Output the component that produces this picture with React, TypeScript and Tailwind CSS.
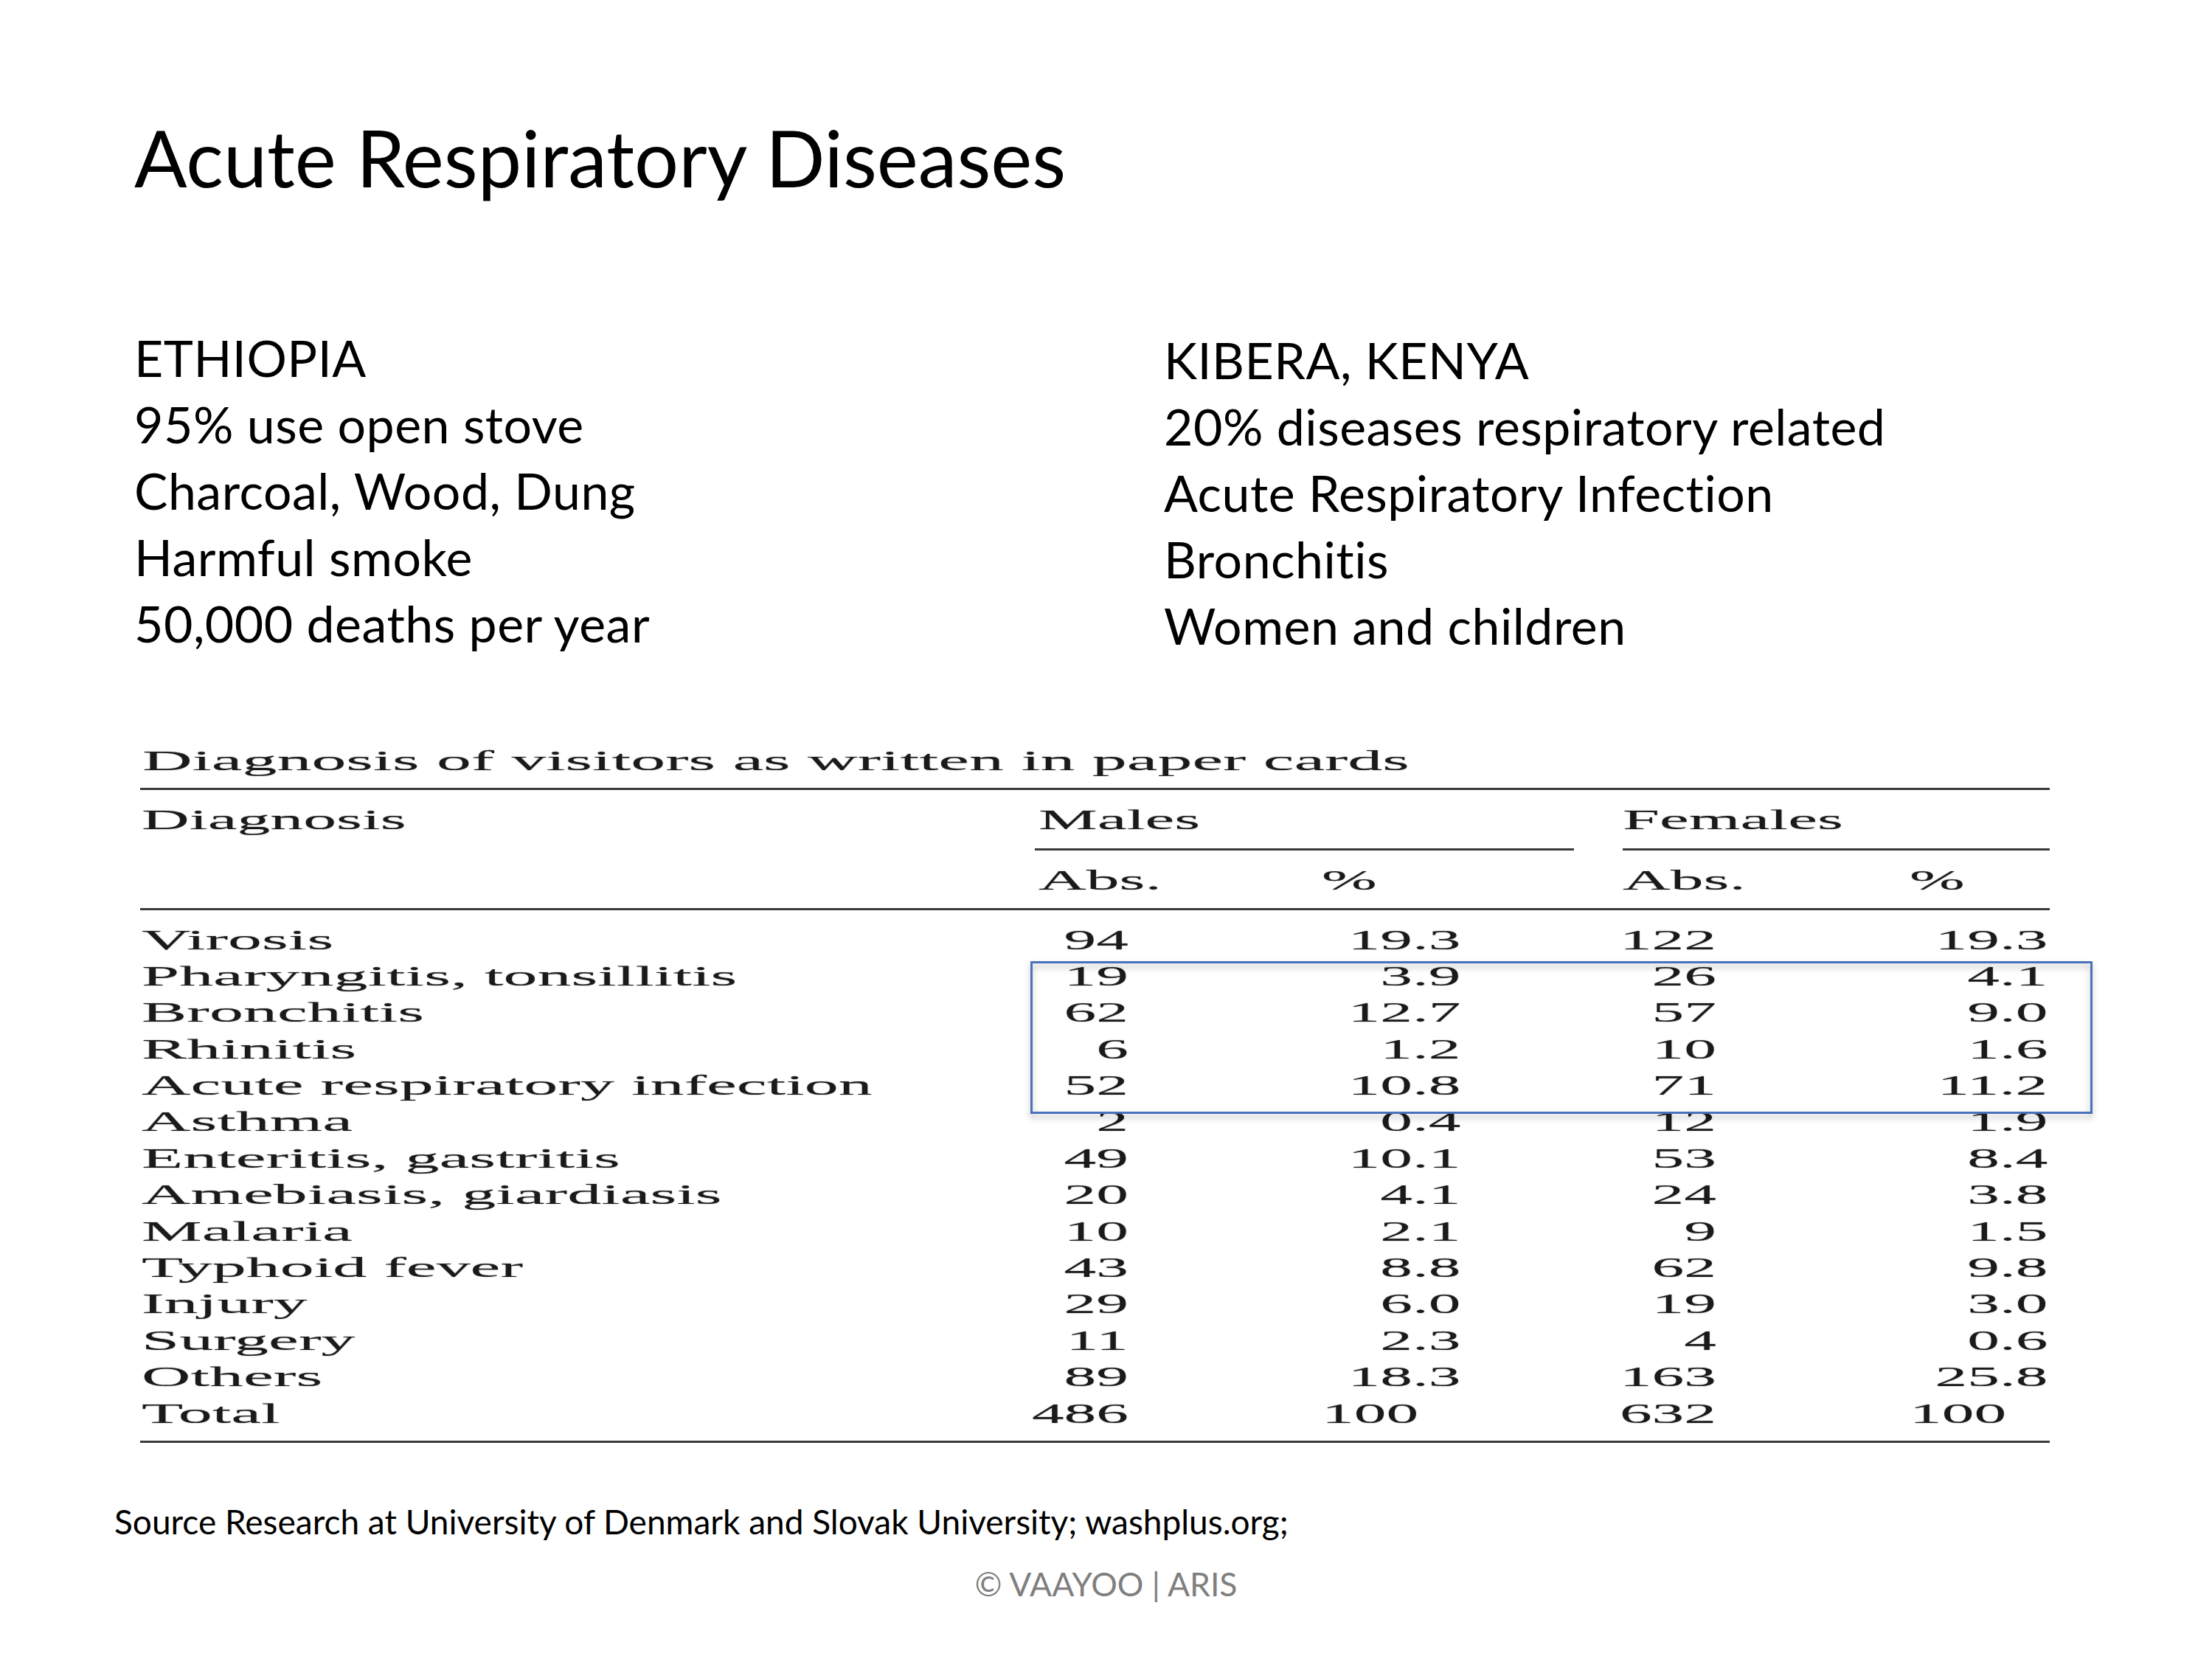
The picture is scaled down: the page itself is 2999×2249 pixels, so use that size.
type Row = [string, string, string, string, string];

const rows: Row[] = [
  ["Virosis", "94", "19.3", "122", "19.3"],
  ["Pharyngitis, tonsillitis", "19", "3.9", "26", "4.1"],
  ["Bronchitis", "62", "12.7", "57", "9.0"],
  ["Rhinitis", "6", "1.2", "10", "1.6"],
  ["Acute respiratory infection", "52", "10.8", "71", "11.2"],
  ["Asthma", "2", "0.4", "12", "1.9"],
  ["Enteritis, gastritis", "49", "10.1", "53", "8.4"],
  ["Amebiasis, giardiasis", "20", "4.1", "24", "3.8"],
  ["Malaria", "10", "2.1", "9", "1.5"],
  ["Typhoid fever", "43", "8.8", "62", "9.8"],
  ["Injury", "29", "6.0", "19", "3.0"],
  ["Surgery", "11", "2.3", "4", "0.6"],
  ["Others", "89", "18.3", "163", "25.8"],
];

const ethiopia = [
  "ETHIOPIA",
  "95% use open stove",
  "Charcoal, Wood, Dung",
  "Harmful smoke",
  "50,000 deaths per year",
];

const kibera = [
  "KIBERA, KENYA",
  "20% diseases respiratory related",
  "Acute Respiratory Infection",
  "Bronchitis",
  "Women and children",
];

// the table is a scanned figure stretched sideways, so the glyphs get scaled on x
function Label({ children }: { children: string }) {
  return (
    <span className="inline-block origin-left scale-x-[2.42] whitespace-nowrap">
      {children}
    </span>
  );
}

function Head({ children }: { children: string }) {
  return (
    <span className="inline-block origin-left scale-x-[2.36] whitespace-nowrap">
      {children}
    </span>
  );
}

function Num({ children }: { children: string }) {
  return (
    <span className="inline-block origin-right scale-x-[2.3] whitespace-nowrap">
      {children}
    </span>
  );
}

function NumL({ children }: { children: string }) {
  return (
    <span className="inline-block origin-left scale-x-[2.3] whitespace-nowrap">
      {children}
    </span>
  );
}

function Rule({ className = "" }: { className?: string }) {
  return <div className={`h-[3px] bg-[#3a3a3a] ${className}`} />;
}

function DiagnosisTable() {
  return (
    <div className="relative ml-[190px] w-[2589px] text-[38px] text-[#1a1a1a] font-['Liberation_Serif','Times_New_Roman',serif] [text-shadow:0_0_1px_rgba(0,0,0,0.45)]">
      <div className="h-[60px] pl-[3px] leading-[60px]">
        <span className="inline-block origin-left scale-x-[2.47] whitespace-nowrap">
          Diagnosis of visitors as written in paper cards
        </span>
      </div>

      <Rule className="mt-[7px] w-full" />

      {/* header */}
      <div className="mt-[15px] flex h-[50px] leading-[50px]">
        <div className="w-[1216px] pl-[2px]">
          <Head>Diagnosis</Head>
        </div>
        <div className="w-[794px] pl-[2px]">
          <Head>Males</Head>
        </div>
        <div className="flex-1">
          <Head>Females</Head>
        </div>
      </div>

      <div className="mt-[14px] flex">
        <Rule className="ml-[1213px] w-[731px]" />
        <Rule className="ml-[66px] w-[579px]" />
      </div>

      <div className="mt-[15px] flex h-[50px] leading-[50px]">
        <div className="w-[1216px]" />
        <div className="w-[386px] pl-[2px]">
          <Head>Abs.</Head>
        </div>
        <div className="w-[408px]">
          <Head>%</Head>
        </div>
        <div className="w-[389px]">
          <Head>Abs.</Head>
        </div>
        <div className="flex-1">
          <Head>%</Head>
        </div>
      </div>

      <Rule className="mt-[13px] w-full" />

      {/* body */}
      <div className="mt-[15.5px]">
        {rows.map((r) => (
          <div key={r[0]} className="flex h-[49.4px] leading-[49.4px]">
            <div className="w-[1216px] pl-[2px]">
              <Label>{r[0]}</Label>
            </div>
            <div className="w-[124px] text-right">
              <Num>{r[1]}</Num>
            </div>
            <div className="w-[450px] text-right">
              <Num>{r[2]}</Num>
            </div>
            <div className="w-[347px] text-right">
              <Num>{r[3]}</Num>
            </div>
            <div className="w-[449px] text-right">
              <Num>{r[4]}</Num>
            </div>
          </div>
        ))}
        <div className="flex h-[49.4px] leading-[49.4px]">
          <div className="w-[1216px] pl-[2px]">
            <Label>Total</Label>
          </div>
          <div className="w-[124px] text-right">
            <Num>486</Num>
          </div>
          <div className="w-[450px] pl-[262px]">
            <NumL>100</NumL>
          </div>
          <div className="w-[347px] text-right">
            <Num>632</Num>
          </div>
          <div className="w-[449px] pl-[262px]">
            <NumL>100</NumL>
          </div>
        </div>
      </div>

      <Rule className="mt-[12px] w-full" />

      {/* highlight box drawn over the figure */}
      <div className="absolute left-[1207px] top-[302px] h-[207px] w-[1440px] border-[3px] border-[#4a72ba] drop-shadow-[0_5px_4px_rgba(0,0,0,0.3)]" />
    </div>
  );
}

export default function App() {
  return (
    <div className="flex h-[2249px] w-[2999px] flex-col bg-white text-black font-['Lato','Liberation_Sans',sans-serif]">
      <h1 className="ml-[182px] mt-[160px] text-[106px] font-normal leading-none">
        Acute Respiratory Diseases
      </h1>

      <div className="mt-[174px] grid grid-cols-[1396px_1fr] pl-[182px] text-[68px] leading-[90px] tracking-[0.5px]">
        <div>
          {ethiopia.map((t) => (
            <div key={t}>{t}</div>
          ))}
        </div>
        <div className="mt-[3px]">
          {kibera.map((t) => (
            <div key={t}>{t}</div>
          ))}
        </div>
      </div>

      <div className="mt-[108px]">
        <DiagnosisTable />
      </div>

      <div className="ml-[155px] mt-[82px] text-[46px] leading-[50px]">
        Source Research at University of Denmark and Slovak University; washplus.org;
      </div>

      <div className="mt-[34px] text-center text-[44.5px] leading-[50px] text-[#7f7f7f]">
        © VAAYOO | ARIS
      </div>
    </div>
  );
}
